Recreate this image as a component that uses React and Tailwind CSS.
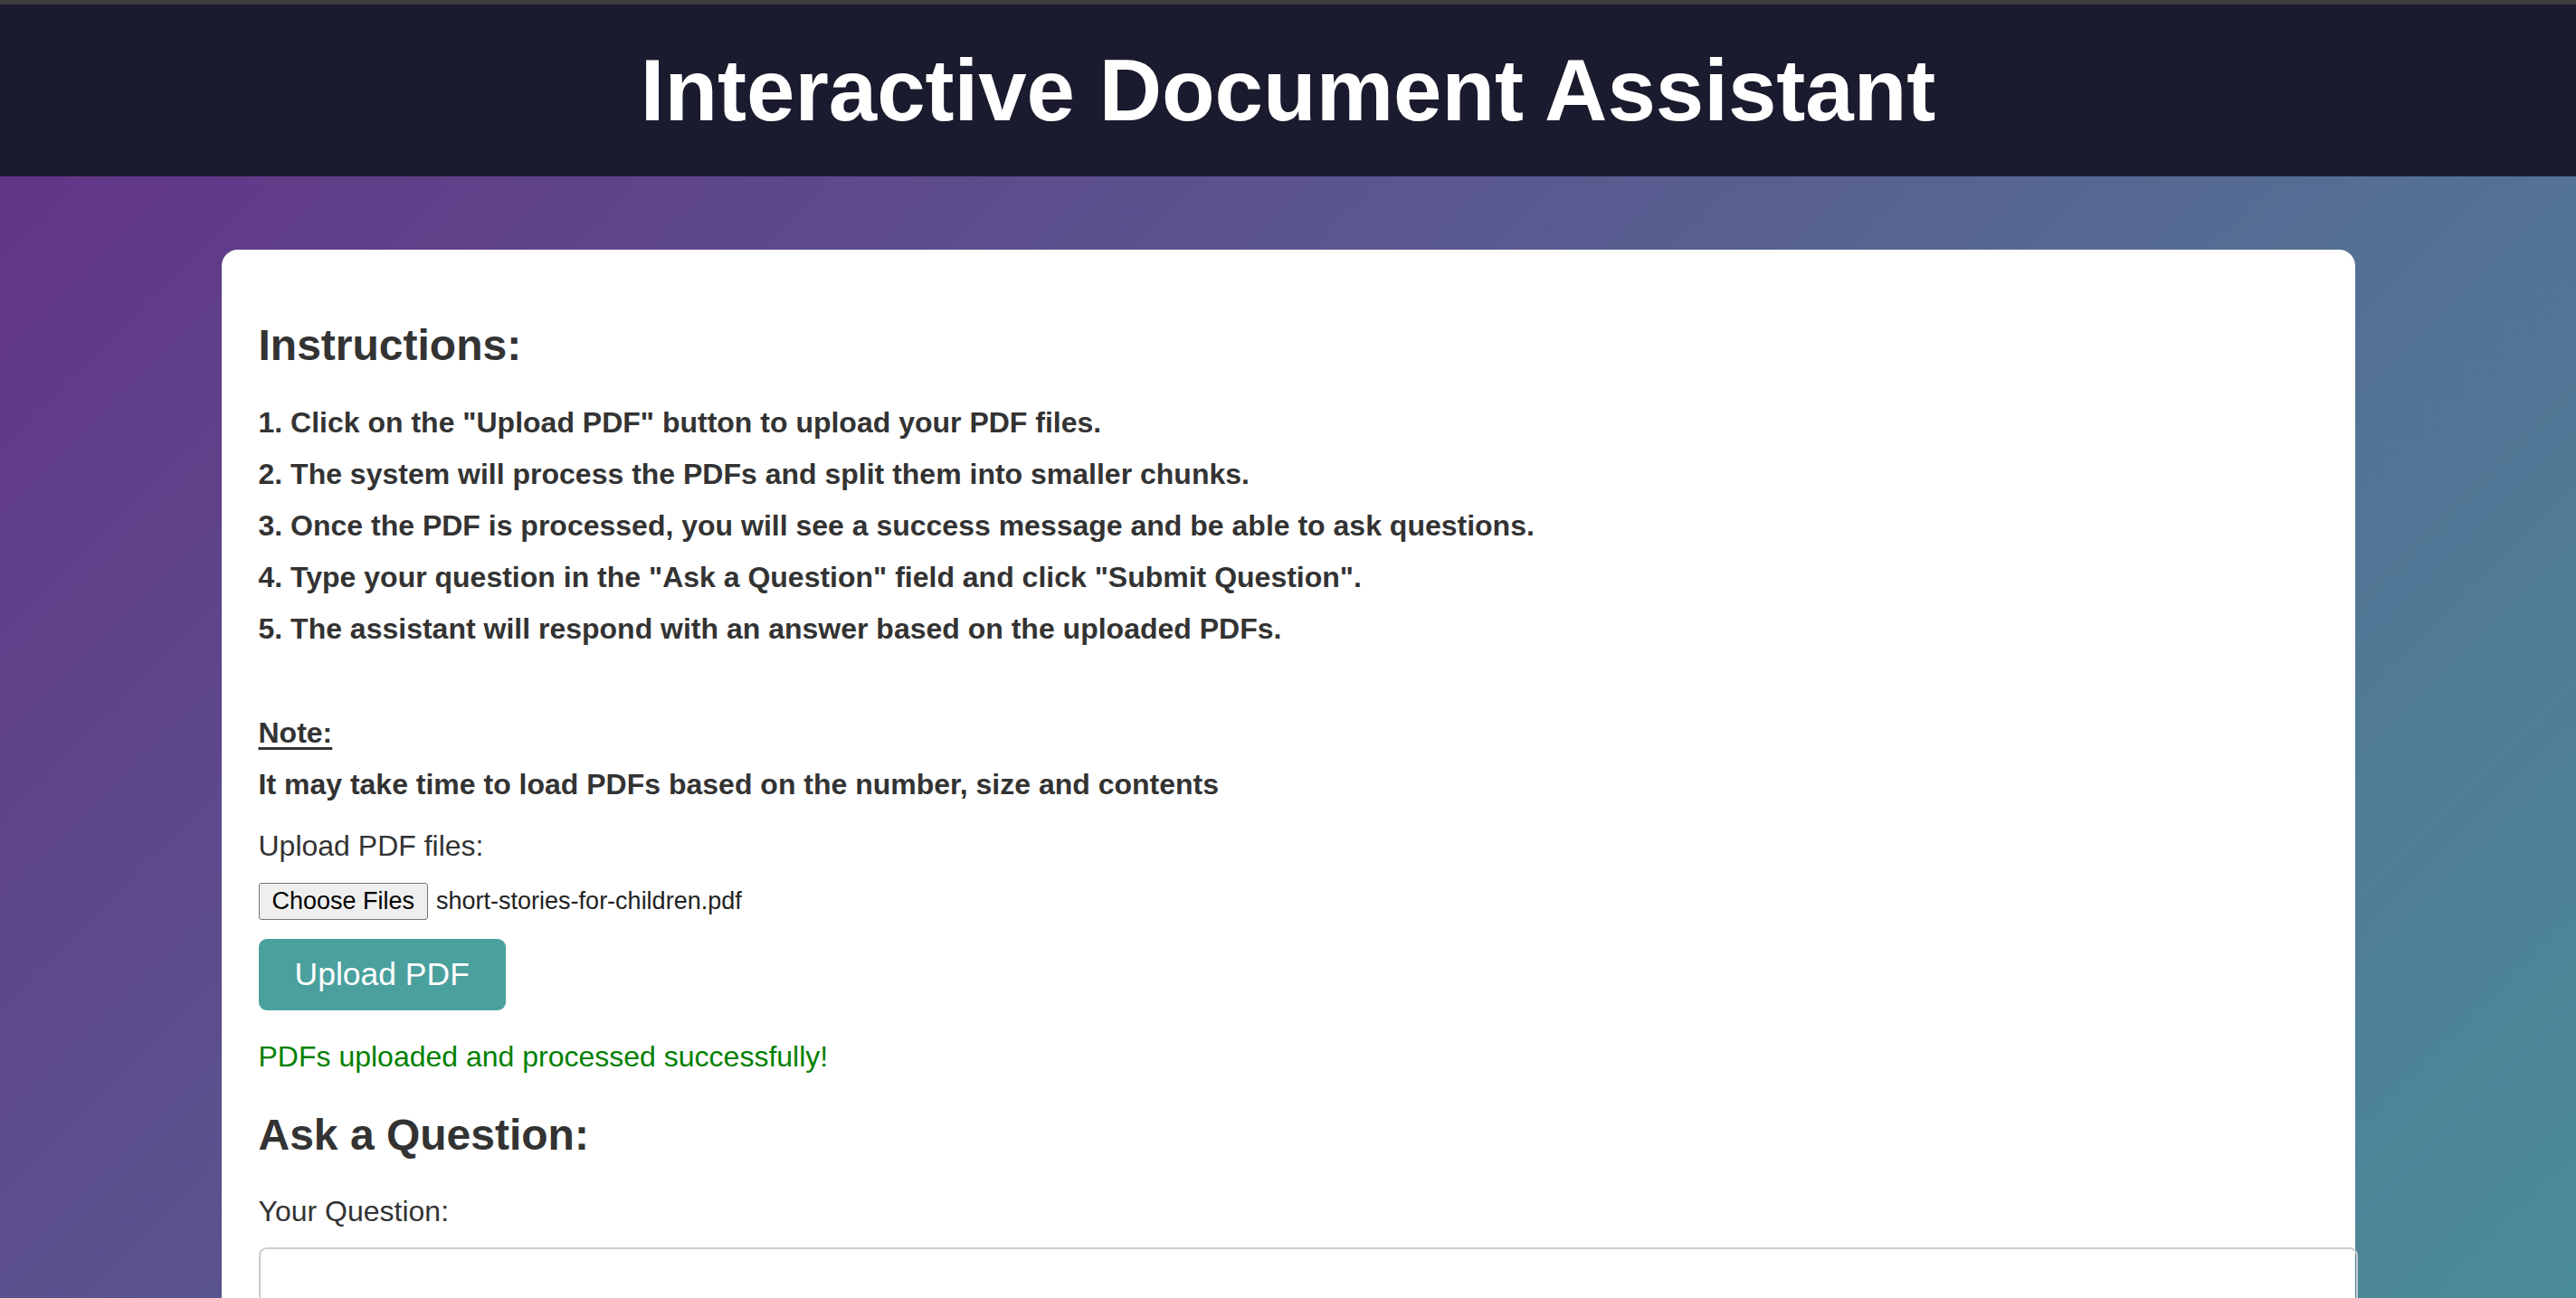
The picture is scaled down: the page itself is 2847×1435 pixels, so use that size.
import React from 'react';

const steps = [
  '1. Click on the "Upload PDF" button to upload your PDF files.',
  '2. The system will process the PDFs and split them into smaller chunks.',
  '3. Once the PDF is processed, you will see a success message and be able to ask questions.',
  '4. Type your question in the "Ask a Question" field and click "Submit Question".',
  '5. The assistant will respond with an answer based on the uploaded PDFs.',
];

export default function App() {
  return (
    <div className="h-screen flex flex-col font-['Liberation_Sans',Arial,sans-serif] text-[#333]">
      <div className="h-[5px] bg-[#3d3d3d] shrink-0" />
      <header className="h-[190px] shrink-0 bg-[#1b1b2f] flex items-center justify-center">
        <h1 className="text-[96px] font-bold text-white leading-none">Interactive Document Assistant</h1>
      </header>

      <main className="flex-1 overflow-y-auto [scrollbar-width:none] bg-[linear-gradient(135deg,#623587_0%,#5c4f8d_30%,#537395_70%,#4a8c98_100%)]">
        <div className="max-w-[2358px] mx-auto mt-[81px] mb-[80px] bg-white rounded-[18px] pt-[40px] pb-[60px] px-[41px]">
          {/* Instructions */}
          <h2 className="mt-[39px] text-[48px] leading-[54px] font-bold">Instructions:</h2>
          <ol className="mt-[30px]">
            {steps.map((s) => (
              <li key={s} className="text-[32px] leading-[57px] font-bold">{s}</li>
            ))}
          </ol>

          <p className="mt-[58px] text-[32px] leading-[57px] font-bold underline underline-offset-[5px] decoration-[3px]">Note:</p>
          <p className="text-[32px] leading-[57px] font-bold">
            It may take time to load PDFs based on the number, size and contents
          </p>

          {/* Upload */}
          <label className="block mt-[11px] text-[32px] leading-[57px]">Upload PDF files:</label>
          <div className="mt-[12px] flex items-center gap-[9px]">
            <button className="h-[41px] px-[14px] border border-[#767676] rounded-[3px] bg-[#efefef] text-black text-[27px] leading-none">
              Choose Files
            </button>
            <span className="text-[27px] leading-none text-[#222]">short-stories-for-children.pdf</span>
          </div>
          <button className="mt-[21px] h-[79px] px-[40px] rounded-[9px] bg-[#4aa09d] text-white text-[35.5px] leading-none">
            Upload PDF
          </button>
          <p className="mt-[23px] text-[32px] leading-[57px] text-[#008000]">PDFs uploaded and processed successfully!</p>

          {/* Question */}
          <h2 className="mt-[31px] text-[48px] leading-[54px] font-bold">Ask a Question:</h2>
          <label className="block mt-[29px] text-[32px] leading-[57px]">Your Question:</label>
          <textarea
            className="mt-[11px] block box-content w-full h-[160px] p-[20px] border-2 border-[#ccc] rounded-[9px] text-[31px] resize-y"
          />
          <button className="mt-[30px] h-[79px] px-[40px] rounded-[9px] bg-[#4aa09d] text-white text-[35.5px] leading-none">
            Submit Question
          </button>
        </div>
      </main>
    </div>
  );
}
